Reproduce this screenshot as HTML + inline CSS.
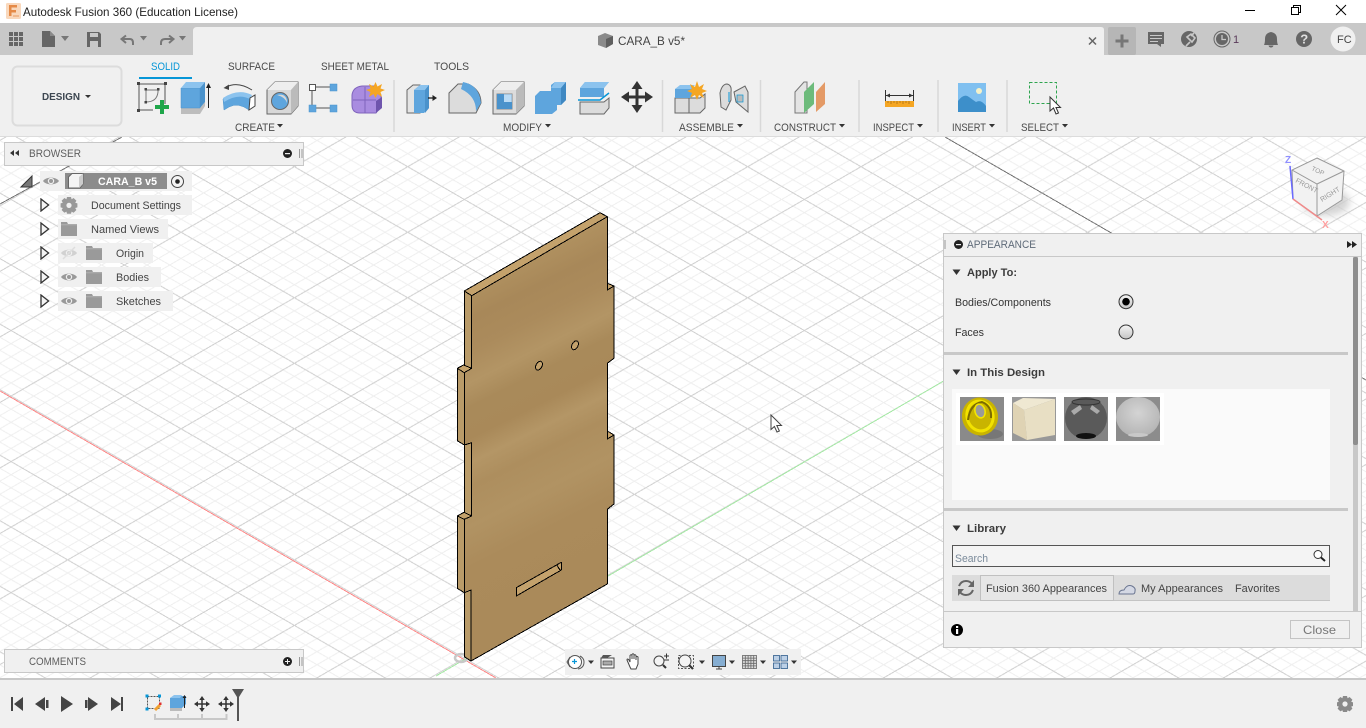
<!DOCTYPE html>
<html>
<head>
<meta charset="utf-8">
<title>Autodesk Fusion 360</title>
<style>
html,body{margin:0;padding:0;width:1366px;height:728px;overflow:hidden;background:#fff}
svg{display:block;position:absolute;left:0;top:0}
text{font-family:"Liberation Sans",sans-serif;font-size:11px;fill:#4a4a4a}
.b{font-weight:bold;fill:#3c3c3c}
.bl{fill:#5e5e5e;font-size:11px}
.t{fill:#444;font-size:11px}
</style>
</head>
<body>
<svg width="1366" height="728" viewBox="0 0 1366 728" xmlns="http://www.w3.org/2000/svg">
<defs>
<pattern id="grid" patternUnits="userSpaceOnUse" x="747.7" y="166.7" width="113.33" height="65.53">
<path fill="none" stroke="#efefef" stroke-width="1" shape-rendering="crispEdges" d="M0 -52.42L113.33 13.11M0 -39.32L113.33 26.21M0 -26.21L113.33 39.32M0 -13.11L113.33 52.42M0 13.11L113.33 78.64M0 26.21L113.33 91.74M0 39.32L113.33 104.85M0 52.42L113.33 117.95M0 13.11L113.33 -52.42M0 26.21L113.33 -39.32M0 39.32L113.33 -26.21M0 52.42L113.33 -13.11M0 78.64L113.33 13.11M0 91.74L113.33 26.21M0 104.85L113.33 39.32M0 117.95L113.33 52.42"/>
<path fill="none" stroke="#d0d0d0" stroke-width="1" shape-rendering="crispEdges" d="M0 0L113.33 65.53M0 65.53L113.33 0"/>
</pattern>
<linearGradient id="wood" gradientUnits="userSpaceOnUse" x1="480" y1="250" x2="640" y2="570">
<stop offset="0" stop-color="#ad8e5e"/>
<stop offset=".08" stop-color="#b09160"/>
<stop offset=".16" stop-color="#a88859"/>
<stop offset=".24" stop-color="#ab8b5c"/>
<stop offset=".32" stop-color="#b39565"/>
<stop offset=".38" stop-color="#a98a5a"/>
<stop offset=".46" stop-color="#a98959"/>
<stop offset=".52" stop-color="#b49666"/>
<stop offset=".58" stop-color="#ad8e5e"/>
<stop offset=".68" stop-color="#b19363"/>
<stop offset=".78" stop-color="#ab8b5b"/>
<stop offset="1" stop-color="#aa8a5a"/>
</linearGradient>
<linearGradient id="radio" x1="0" y1="0" x2="0" y2="1"><stop offset="0" stop-color="#f5f5f5"/><stop offset="1" stop-color="#c4c4c4"/></linearGradient>
<radialGradient id="frost" cx=".5" cy=".4" r=".6"><stop offset="0" stop-color="#d4d4d4"/><stop offset="1" stop-color="#b4b4b4"/></radialGradient>
<filter id="blur" x="-50%" y="-50%" width="200%" height="200%"><feGaussianBlur stdDeviation="4"/></filter>
<symbol id="folder" width="16" height="14" viewBox="0 0 16 14"><path fill="#9a9a9a" d="M0 0H6L7 2H16V14H0Z"/><path fill="#bcbcbc" d="M0 2.5H16V3.2H0Z"/></symbol>
<symbol id="eye" width="16" height="10" viewBox="0 0 16 10"><path fill="#999" d="M0 5C3 0.5 13 0.5 16 5C13 9.5 3 9.5 0 5Z"/><circle cx="8" cy="5" r="3.2" fill="#f0f0f0"/><circle cx="8" cy="5" r="2" fill="#999"/></symbol>
<symbol id="exp" width="10" height="14" viewBox="0 0 10 14"><path fill="#f4f4f4" stroke="#333" stroke-width="1.3" d="M1 1L8.6 7L1 13Z"/></symbol>
<symbol id="mv" width="32" height="32" viewBox="0 0 32 32"><path fill="#333" d="M16 0L21.5 8H17.5V14.5H24V10.5L32 16L24 21.5V17.5H17.5V24H21.5L16 32L10.5 24H14.5V17.5H8V21.5L0 16L8 10.5V14.5H14.5V8H10.5Z"/></symbol>
</defs>

<!-- viewport -->
<rect x="0" y="137" width="1366" height="542" fill="#fff"/>
<rect x="0" y="137" width="1366" height="542" fill="url(#grid)"/>
<path fill="none" stroke="#777" stroke-width="1" shape-rendering="crispEdges" d="M0 204L122 137M945 137L1366 380"/>
<path fill="none" stroke="#ff8a8a" stroke-width="1" shape-rendering="crispEdges" d="M0 391L496 678"/>
<path fill="none" stroke="#a6eaa6" stroke-width="1" shape-rendering="crispEdges" d="M943 381.4L436 676"/>
<ellipse cx="461" cy="658" rx="6" ry="4" fill="none" stroke="#c8c8c8" stroke-width="2.500"/>

<!-- body -->
<g stroke="#000" stroke-width="1" stroke-linejoin="round" shape-rendering="crispEdges">
<path fill="#b99b69" d="M464.3 291L600 212.7L607.3 216.7L471.7 295.7V368.3L464.3 372.7V445L471.7 442.7V516L464.3 519.3V592.7L471 590V661L464.3 656.7V592.7L457.3 588.3V516L464.3 512.3V445L457.3 440.7V368.3L464.3 365.7Z"/>
<path fill="url(#wood)" d="M471.7 295.7L607.3 216.7V290L614 286V358.3L607.3 363.3V439L614 435V504L607.3 509.3V584L471 661V590L464.3 592.7V519.3L471.7 516V442.7L464.3 445V372.7L471.7 368.3Z"/>
<path fill="#c4a26c" d="M464.3 291L600 212.7L607.3 216.7L471.7 295.7Z"/>
<path fill="#c4a26c" d="M457.3 368.3L463.5 365L471.7 368.3L464.3 372.7Z"/>
<path fill="#c4a26c" d="M457.3 516L464 512.3L471.7 516L464.3 519.3Z"/>
<path fill="#c4a26c" d="M607.3 283.3L614 286L607.3 290Z"/>
<path fill="#c4a26c" d="M607.3 431L614 435L607.3 439Z"/>
<ellipse cx="575" cy="345.3" rx="3" ry="4.8" transform="rotate(28 575 345.3)" fill="#c4a26c"/>
<ellipse cx="539" cy="365.7" rx="3" ry="4.8" transform="rotate(28 539 365.7)" fill="#c4a26c"/>
<path fill="#c4a26c" d="M516.3 587.7L561.3 562.3V570L516.3 596Z"/>
<path fill="none" d="M556.7 565L560 570"/>
</g>

<!-- view cube -->
<ellipse cx="1326" cy="202" rx="24" ry="14" fill="#aaa" opacity=".5" filter="url(#blur)"/>
<path fill="#f2f2f2" stroke="#999" d="M1317 158L1344 171L1342 200L1317 216L1293 199L1292 170Z"/>
<path fill="none" stroke="#999" d="M1292 170L1317 184L1344 171M1317 184V216"/>
<path stroke="#6a6aff" stroke-width="1.5" d="M1290 166L1293 199"/>
<path stroke="#f08a8a" stroke-width="1.5" d="M1293 199L1322 220"/>
<text x="1285" y="163" style="font-size:10px;font-weight:bold;fill:#8f8fff">Z</text>
<text x="1322" y="228" style="font-size:10px;font-weight:bold;fill:#ff9f9f">X</text>
<text transform="translate(1311,170) rotate(25)" style="font-size:6.5px;fill:#999">TOP</text>
<text transform="translate(1295,182) rotate(28)" style="font-size:7px;fill:#999">FRONT</text>
<text transform="translate(1322,202) rotate(-32)" style="font-size:7px;fill:#999">RIGHT</text>

<!-- cursor in viewport -->
<path fill="#fff" stroke="#444" d="M771 415V429.5L774.4 426.5L777 432L779.4 431L776.8 425.5H781.5Z"/>

<!-- title bar -->
<rect x="0" y="0" width="1366" height="23" fill="#fff"/>
<rect x="6" y="3" width="15" height="16" rx="1.5" fill="#f9d8bc"/>
<path fill="#e58a47" d="M9 5H17V7.5H11.5V10H16V12.5H11.5V16H9Z"/>
<rect x="13" y="15" width="6" height="2" fill="#f0b98f"/>
<text x="23" y="16" textLength="215" lengthAdjust="spacingAndGlyphs" style="font-size:12px;fill:#222">Autodesk Fusion 360 (Education License)</text>
<path stroke="#000" stroke-width="1" fill="none" d="M1245 10.5H1255"/>
<path stroke="#000" stroke-width="1" fill="none" d="M1291.5 7.5H1298.5V14.5H1291.5ZM1293.5 7.5V5.5H1300.5V12.5H1298.5"/>
<path stroke="#000" stroke-width="1" fill="none" d="M1336 5L1346 15M1346 5L1336 15"/>

<!-- top gray bar -->
<rect x="0" y="23" width="1366" height="32" fill="#c8c8c8"/>
<path fill="#f0f0f0" d="M193 55V31Q193 27 197 27H1101Q1104 27 1104 30V55Z"/>
<rect x="1108" y="27" width="28" height="28" rx="2" fill="#b6b6b6"/>
<path fill="#777" d="M1120.5 34.5H1123.5V39.5H1128.5V42.5H1123.5V47.5H1120.5V42.5H1115.5V39.5H1120.5Z"/>
<path stroke="#666" stroke-width="1.5" fill="none" d="M1089 37.5L1096 44.5M1096 37.5L1089 44.5"/>
<!-- app grid -->
<g fill="#666"><rect x="9" y="32" width="4" height="4"/><rect x="14" y="32" width="4" height="4"/><rect x="19" y="32" width="4" height="4"/><rect x="9" y="37" width="4" height="4"/><rect x="14" y="37" width="4" height="4"/><rect x="19" y="37" width="4" height="4"/><rect x="9" y="42" width="4" height="4"/><rect x="14" y="42" width="4" height="4"/><rect x="19" y="42" width="4" height="4"/></g>
<path fill="#666" d="M42 31H50L55 36V47H42Z"/><path fill="#8a8a8a" d="M50 31V36H55Z"/>
<path fill="#777" d="M61 36H69L65 41Z"/>
<path fill="#666" d="M87 32H99L101 34V47H87Z"/><rect x="90" y="33" width="8" height="4" fill="#c8c8c8"/><rect x="90" y="41" width="8" height="6" fill="#c8c8c8"/>
<path fill="none" stroke="#777" stroke-width="2" d="M123 39H130Q133 39 133 43V45M126 35.5L121.5 39L126 43"/>
<path fill="#777" d="M140 36H147L143.5 40.5Z"/>
<path fill="none" stroke="#777" stroke-width="2" d="M172 39H165Q161 39 161 43V45M169 35.5L173.5 39L169 43"/>
<path fill="#777" d="M179 36H186L182.5 40.5Z"/>
<!-- right bar icons -->
<path fill="#666" d="M1148 32H1164V44H1161V47L1157 44H1148Z"/><path stroke="#c8c8c8" d="M1150 35.5H1162M1150 38.5H1162M1150 41.5H1158"/>
<circle cx="1189" cy="39" r="8" fill="#666"/><path stroke="#c8c8c8" stroke-width="1.6" fill="none" d="M1186 46L1190 42M1187 37L1192 42L1195 38L1191 34ZM1191 36L1194 33"/>
<circle cx="1222" cy="39" r="8" fill="#c8c8c8" stroke="#666" stroke-width="1"/><circle cx="1222" cy="39" r="6" fill="#666"/><path stroke="#c8c8c8" stroke-width="1.3" fill="none" d="M1222 35V39.5H1226"/>
<text x="1233" y="43" style="font-size:11px;fill:#5a3a5a">1</text>
<path fill="#666" d="M1271 32Q1277 33 1277 39Q1277 43 1278 45H1264Q1265 43 1265 39Q1265 33 1271 32ZM1268.5 45.5H1273.5Q1273 47.5 1271 47.5Q1269 47.5 1268.5 45.5Z"/>
<circle cx="1304" cy="39" r="8" fill="#666"/><text x="1300.3" y="43.5" style="font-size:13px;font-weight:bold;fill:#e0e0e0">?</text>
<circle cx="1343" cy="39" r="12.5" fill="#f0f0f0"/><text x="1337" y="43" style="font-size:11px;fill:#444">FC</text>

<!-- document title -->
<path fill="#8a8a8a" d="M598 36L605 33L613 36V44L606 48L598 45Z"/><path fill="#5f5f5f" d="M606 39L613 36V44L606 48Z"/>
<text x="618" y="45" textLength="67" lengthAdjust="spacingAndGlyphs" style="font-size:12px;fill:#444">CARA_B v5*</text>

<!-- toolbar -->
<rect x="0" y="55" width="1366" height="81" fill="#f0f0f0"/>
<rect x="0" y="136" width="1366" height="1" fill="#dcdcdc"/>
<text x="151" y="70" textLength="29" lengthAdjust="spacingAndGlyphs" style="fill:#0696d7">SOLID</text>
<rect x="139" y="77" width="53" height="2" fill="#0696d7"/>
<text x="228" y="70" textLength="47" lengthAdjust="spacingAndGlyphs">SURFACE</text>
<text x="321" y="70" textLength="68" lengthAdjust="spacingAndGlyphs">SHEET METAL</text>
<text x="434" y="70" textLength="35" lengthAdjust="spacingAndGlyphs">TOOLS</text>

<rect x="12.5" y="66.5" width="109" height="59" rx="5" fill="#f0f0f0" stroke="#dcdcdc" stroke-width="2"/>
<text x="42" y="100" textLength="38" lengthAdjust="spacingAndGlyphs" style="font-size:10px;font-weight:bold;fill:#3c4650">DESIGN</text>
<path fill="#333" d="M85 95H91L88 98Z"/>

<!-- separators -->
<path stroke="#d8d8d8" stroke-width="1.5" d="M394 80V132M662.5 80V132M760.5 80V132M859 80V132M938 80V132M1007 80V132"/>

<!-- labels -->
<text x="235" y="131" textLength="40" lengthAdjust="spacingAndGlyphs">CREATE</text><path fill="#333" d="M277 124H283L280 127.5Z"/>
<text x="503" y="131" textLength="39" lengthAdjust="spacingAndGlyphs">MODIFY</text><path fill="#333" d="M545 124H551L548 127.5Z"/>
<text x="679" y="131" textLength="55" lengthAdjust="spacingAndGlyphs">ASSEMBLE</text><path fill="#333" d="M737 124H743L740 127.5Z"/>
<text x="774" y="131" textLength="62" lengthAdjust="spacingAndGlyphs">CONSTRUCT</text><path fill="#333" d="M839 124H845L842 127.5Z"/>
<text x="873" y="131" textLength="41" lengthAdjust="spacingAndGlyphs">INSPECT</text><path fill="#333" d="M917 124H923L920 127.5Z"/>
<text x="952" y="131" textLength="34" lengthAdjust="spacingAndGlyphs">INSERT</text><path fill="#333" d="M989 124H995L992 127.5Z"/>
<text x="1021" y="131" textLength="38" lengthAdjust="spacingAndGlyphs">SELECT</text><path fill="#333" d="M1062 124H1068L1065 127.5Z"/>

<!-- sketch -->
<path fill="none" stroke="#555" d="M139 84H165V104M139 84V110H153"/>
<path fill="none" stroke="#777" d="M146 90H158V92Q157 102 146 102ZM146 90V102"/>
<g fill="#444"><rect x="137" y="82" width="3" height="3"/><rect x="164" y="82" width="3" height="3"/><rect x="137" y="109" width="3" height="3"/><rect x="144.500" y="88" width="2.500" height="2.500"/><rect x="157" y="88" width="2.500" height="2.500"/><rect x="144.500" y="101" width="2.500" height="2.500"/></g>
<path fill="#1fa64a" d="M160 100H164V105H169V109H164V114H160V109H155V105H160Z"/>
<!-- extrude -->
<path fill="#bdbdbd" d="M181 108H200L205 102V106L200 114H181Z"/>
<path fill="#5ea5dd" stroke="#4b93cc" stroke-width=".5" d="M181 88H200V108H181Z"/>
<path fill="#8cc3ee" d="M181 88L186 82H205L200 88Z"/><path fill="#4a92cb" d="M200 88L205 82V102L200 108Z"/>
<path stroke="#222" fill="none" d="M208.500 108V86"/><path fill="#222" d="M208.500 83L211 88H206Z"/>
<!-- revolve -->
<path fill="none" stroke="#444" d="M226 87Q238 81 252 90"/><path fill="#444" d="M223.500 88L229 84.500L229 90Z"/>
<path fill="#5ea5dd" stroke="#4b93cc" stroke-width=".5" d="M223 99Q238 89 251 97L249 110Q238 102 229 107L224 110Z"/>
<path fill="#8cc3ee" d="M223 98Q238 88 252 95L250 99Q238 93 224 102Z"/>
<path fill="#fff" stroke="#444" d="M250 98L255 95V106L249 110Z"/>
<!-- hole -->
<path fill="#d8d8d8" stroke="#666" d="M267 90L275 82H298V106L291 114H267Z"/>
<path fill="#eee" d="M267 90L275 82H298L291 90Z"/><path fill="#bbb" d="M291 90L298 82V106L291 114Z"/>
<circle cx="280" cy="101" r="8.500" fill="#5ea5dd" stroke="#666"/><path fill="#d8d8d8" d="M277 95Q287 93 287 103Q285 97 277 95Z"/>
<!-- box points -->
<path stroke="#555" fill="none" d="M315 87H330M312 90V105M315 108H330"/>
<rect x="309.500" y="84.500" width="6" height="6" fill="#fff" stroke="#555"/>
<rect x="330" y="84" width="7" height="7" fill="#5ea5dd" stroke="#4b93cc" stroke-width=".5"/><rect x="309" y="105" width="7" height="7" fill="#5ea5dd" stroke="#4b93cc" stroke-width=".5"/><rect x="330" y="105" width="7" height="7" fill="#5ea5dd" stroke="#4b93cc" stroke-width=".5"/>
<!-- form -->
<path fill="#a98ce0" stroke="#7f63bd" d="M352 95Q353 87 362 86H374L381 95V106L376 113H360Q352 113 352 105Z"/>
<path stroke="#7f63bd" fill="none" d="M353 100H376M365 87V113"/>
<path fill="#6f55ad" d="M376 101L382 97V108L376 113Z"/>
<path fill="#f5a623" d="M375.500 82L377.500 86.500L382 84L380.500 88.500L385 90L380.500 92L382 97L377.500 94L375.500 98L373.500 94L369 97L370.500 92L366 90L370.500 88.500L369 84L373.500 86.500Z"/>

<!-- press pull -->
<path fill="#e4e4e4" stroke="#666" d="M407 90L413 85H420V113H407Z"/>
<path fill="#5ea5dd" d="M414 90L420 85H429V108L424 113H414Z"/><path fill="#8cc3ee" d="M414 90L420 85H429L425 90Z"/><path fill="#4a92cb" d="M425 90L429 85V108L425 113Z"/>
<path stroke="#222" stroke-width="1.3" d="M428 98H434"/><path fill="#222" d="M437 98L432.500 95V101Z"/>
<!-- fillet -->
<path fill="#dcdcdc" stroke="#666" d="M449 93L458 84H468Q481 90 481 103L476 113H449Z"/>
<path fill="#5ea5dd" d="M463 82Q479 85 481 103L476 111Q476 96 461 89Z"/>
<!-- shell -->
<path fill="#dcdcdc" stroke="#666" d="M493 90L501 82H524V106L516 114H493Z"/>
<path fill="#eee" d="M493 90L501 82H524L516 90Z"/><path fill="#bbb" d="M516 90L524 82V106L516 114Z"/>
<rect x="497" y="94" width="15" height="15" fill="#fff" stroke="#888"/>
<path fill="#4a92cb" d="M497 94H504V102H512V109H497Z"/><path fill="#8cc3ee" d="M504 94H512V102H504Z" opacity=".6"/>
<!-- combine -->
<path fill="#5ea5dd" d="M535 96L540 91H551V85L555 82H566V100L561 105H557V110L552 114H535Z"/>
<path fill="#8cc3ee" d="M551 88L555 82H566L561 88Z"/><path fill="#3f88c2" d="M561 88L566 82V100L561 105Z"/>
<!-- split -->
<path fill="#5ea5dd" d="M580 88L585 82H609L604 88V97H580Z"/><path fill="#8cc3ee" d="M580 88L585 82H609L604 88Z"/>
<path fill="#dcdcdc" stroke="#666" d="M580 102H604L609 98V108L604 114H580Z"/>
<path stroke="#0696d7" stroke-width="1.5" fill="none" d="M578 100H600L609 93"/>
<!-- move -->
<use href="#mv" x="621" y="81"/>
<!-- assemble -->
<path fill="#dcdcdc" stroke="#666" d="M675 98H689V113H675Z"/><path fill="#dcdcdc" stroke="#666" d="M689 98H700L705 94V108L700 113H689Z"/>
<path fill="#5ea5dd" d="M675 89L680 86H692V98H675Z"/><path fill="#8cc3ee" d="M675 89L680 85H695L691 89Z"/>
<path fill="#f5a623" d="M697 81L699 87L704 84L702 89L707 91L702 93L704 98L699 95L697 100L695 95L690 98L692 93L687 91L692 89L690 84L695 87Z"/>
<!-- joint -->
<path fill="#dcdcdc" stroke="#666" d="M720 93Q722 84 727 84Q732 85 731 92V100L726 110L721 107Z"/>
<path fill="#dcdcdc" stroke="#666" d="M734 92L745 86L748 92V112L736 102Z"/>
<path stroke="#0696d7" fill="none" d="M729 92V102"/><rect x="737" y="95" width="6" height="7" fill="#bbb" stroke="#0696d7" stroke-width=".7"/>
<!-- construct -->
<path fill="#e4e4e4" stroke="#777" d="M795 92L804 82H807V113H795Z"/>
<path fill="#6dbb7b" d="M804 92L814 82V104L804 113Z"/>
<path fill="#e49a66" d="M816 92L825 82V104L816 112Z"/>
<!-- inspect -->
<path stroke="#333" fill="none" d="M885.500 90V101M913.500 90V101M886 95.500H913"/>
<path fill="#333" d="M886 95.500L890 93.500V97.500ZM913 95.500L909 93.500V97.500Z"/>
<rect x="885" y="101" width="29" height="6" fill="#f5a623"/>
<path stroke="#a06a10" stroke-width=".7" d="M888 101V103M891 101V104M894 101V103M897 101V104M900 101V103M903 101V104M906 101V103M909 101V104"/>
<!-- insert -->
<rect x="958" y="83" width="28" height="29" fill="#80c0f0"/>
<path fill="#3d8fca" d="M958 112V101Q964 93 969 97Q973 100 976 102Q981 99 986 106V112Z"/>
<circle cx="979" cy="91" r="3" fill="#f4f1c9"/>
<!-- select -->
<rect x="1029.500" y="82.500" width="27" height="21" fill="none" stroke="#2ea44f" stroke-dasharray="3 2"/>
<path fill="#fff" stroke="#333" d="M1050 97V111L1053.500 108L1056 114L1058.500 113L1056 107.500H1060.500Z"/>

<!-- browser -->
<rect x="4.500" y="142.500" width="299" height="23" fill="#f0f0f0" stroke="#c8c8c8"/>
<path fill="#333" d="M14 150V156L10 153ZM19 150V156L15 153Z"/>
<text x="29" y="157" textLength="52" lengthAdjust="spacingAndGlyphs" class="bl">BROWSER</text>
<circle cx="287.500" cy="153.500" r="4.500" fill="#222"/><rect x="285" y="153" width="5" height="1.200" fill="#f0f0f0"/>
<path stroke="#999" d="M299.500 149V158M302 149V158"/>

<path fill="#777" stroke="#333" d="M21 187L32 176V187Z"/>
<rect x="40" y="171" width="152" height="20" fill="#f0f0f0"/>
<use href="#eye" x="43" y="176"/>
<rect x="65" y="173" width="102" height="16" fill="#8c8c8c"/>
<path fill="#f4f4f4" stroke="#666" d="M68.500 177L72 173.500H83V184L80 188H68.500Z"/><path fill="#ccc" d="M79 177L83 173.500V184L79 188Z"/>
<text x="98" y="185" textLength="59" lengthAdjust="spacingAndGlyphs" style="font-size:11px;font-weight:bold;fill:#fff">CARA_B v5</text>
<circle cx="177.500" cy="181.500" r="6" fill="#f4f4f4" stroke="#444"/><circle cx="177.500" cy="181.500" r="2.300" fill="#222"/>

<use href="#exp" x="40" y="198"/>
<rect x="58" y="195" width="134" height="20" fill="#f0f0f0"/>
<path fill="#999" d="M67 197H71L71.600 199.200L73.600 198L76.400 200.800L75.200 202.800L77.400 203.400V207.400L75.200 208L76.400 210L73.600 212.800L71.600 211.600L71 213.800H67L66.400 211.600L64.400 212.800L61.600 210L62.800 208L60.600 207.400V203.400L62.800 202.800L61.600 200.800L64.400 198L66.400 199.200ZM69 202.800A2.600 2.600 0 1 0 69 208A2.600 2.600 0 1 0 69 202.800Z" fill-rule="evenodd"/>
<text x="91" y="209" textLength="90" lengthAdjust="spacingAndGlyphs" class="t">Document Settings</text>

<use href="#exp" x="40" y="222"/>
<rect x="58" y="219" width="110" height="20" fill="#f0f0f0"/>
<use href="#folder" x="61" y="222"/>
<text x="91" y="233" textLength="68" lengthAdjust="spacingAndGlyphs" class="t">Named Views</text>

<use href="#exp" x="40" y="246"/>
<rect x="58" y="243" width="95" height="20" fill="#f0f0f0"/>
<g opacity=".35"><use href="#eye" x="61" y="248"/></g>
<path stroke="#ddd" stroke-width="1.500" d="M63 259L75 247"/>
<use href="#folder" x="86" y="246"/>
<text x="116" y="257" textLength="28" lengthAdjust="spacingAndGlyphs" class="t">Origin</text>

<use href="#exp" x="40" y="270"/>
<rect x="58" y="267" width="103" height="20" fill="#f0f0f0"/>
<use href="#eye" x="61" y="272"/>
<use href="#folder" x="86" y="270"/>
<text x="116" y="281" textLength="33" lengthAdjust="spacingAndGlyphs" class="t">Bodies</text>

<use href="#exp" x="40" y="294"/>
<rect x="58" y="291" width="115" height="20" fill="#f0f0f0"/>
<use href="#eye" x="61" y="296"/>
<use href="#folder" x="86" y="294"/>
<text x="116" y="305" textLength="45" lengthAdjust="spacingAndGlyphs" class="t">Sketches</text>

<!-- comments -->
<rect x="4.500" y="649.500" width="299" height="23" fill="#f0f0f0" stroke="#c8c8c8"/>
<text x="29" y="665" textLength="57" lengthAdjust="spacingAndGlyphs" class="bl">COMMENTS</text>
<circle cx="287.500" cy="661.500" r="4.500" fill="#222"/><path fill="#f0f0f0" d="M287 659H288V661H290V662H288V664H287V662H285V661H287Z"/>
<path stroke="#999" d="M299.500 657V666M302 657V666"/>

<!-- nav bar -->
<rect x="565" y="649" width="236" height="26" fill="#f0f0f0"/>
<ellipse cx="575" cy="662" rx="6.500" ry="6.500" fill="#fff" stroke="#555"/><path fill="none" stroke="#555" d="M570 657L567 662L570 667M578 669Q584 668 584 662Q584 658 580 656"/><path stroke="#0696d7" stroke-width="1.200" d="M572 661.500H577M574.500 659V664"/>
<path fill="#333" d="M588 660.500H594L591 664Z"/>
<path fill="#f4f4f4" stroke="#444" d="M601 658H614V668H601Z"/><path fill="#555" d="M603 655H612L607 658H601Z"/><rect x="603" y="661" width="9" height="4" fill="#aaa" stroke="#444" stroke-width=".7"/>
<path fill="#fff" stroke="#444" d="M630 667L627 660Q627 658 629 660L630 662V655.500Q631 654 632 655.500V659V654.500Q633 653 634 654.500V659V655.500Q635 654 636 655.500V660V657Q637 656 638 657V664L636 669H631Z"/>
<circle cx="659" cy="661" r="5" fill="#f4f4f4" stroke="#444"/><path stroke="#333" stroke-width="2" d="M663 665L666 668"/><path stroke="#333" d="M664 656H669M666.500 653.500V658.500M664 660H669"/>
<rect x="678.500" y="655.500" width="15" height="13" fill="none" stroke="#555" stroke-dasharray="2 1.500"/>
<circle cx="685" cy="661" r="6" fill="#f4f4f4" stroke="#444"/><path stroke="#333" stroke-width="2.200" d="M689 665L693 669"/>
<path fill="#333" d="M699 660.500H705L702 664Z"/>
<rect x="712.500" y="655.500" width="13" height="11" fill="#86aed2" stroke="#444"/><path stroke="#444" fill="none" d="M716 669H722M719 667V669"/>
<path fill="#333" d="M729 660.500H735L732 664Z"/>
<g fill="#ddd" stroke="#666" stroke-width=".8"><rect x="742.500" y="655.500" width="14" height="13"/><path fill="none" d="M745.300 655.500V668.500M748.100 655.500V668.500M750.900 655.500V668.500M753.700 655.500V668.500M742.500 658.100H756.500M742.500 660.700H756.500M742.500 663.300H756.500M742.500 665.900H756.500"/></g>
<path fill="#333" d="M760 660.500H766L763 664Z"/>
<g fill="#bcd0e6" stroke="#2f5d8c" stroke-width=".8"><rect x="773.500" y="655.500" width="6" height="5.500"/><rect x="781" y="655.500" width="6.500" height="5.500"/><rect x="773.500" y="663" width="6" height="5.500"/><rect x="781" y="663" width="6.500" height="5.500"/></g>
<path fill="#333" d="M791 660.500H797L794 664Z"/>

<!-- appearance panel -->
<rect x="943.500" y="233.500" width="418" height="414" fill="#f0f0f0" stroke="#c8c8c8"/>
<path stroke="#c8c8c8" d="M944 256.500H1361M944 611.500H1361"/>
<path stroke="#999" d="M945 240V249"/>
<circle cx="958.500" cy="244.500" r="4.500" fill="#222"/><rect x="956" y="244" width="5" height="1.200" fill="#f0f0f0"/>
<text x="967" y="248" textLength="69" lengthAdjust="spacingAndGlyphs" class="bl" style="fill:#5e6a78">APPEARANCE</text>
<path fill="#222" d="M1347 241V248L1352 244.500ZM1352 241V248L1357 244.500Z"/>
<rect x="1353" y="257" width="5" height="354" fill="#c8c8c8"/>
<rect x="1353" y="257" width="5" height="188" rx="2" fill="#8e8e8e"/>

<path fill="#333" d="M952.500 269.500H960.500L956.500 275Z"/>
<text x="967" y="276" textLength="50" lengthAdjust="spacingAndGlyphs" class="b">Apply To:</text>
<text x="955" y="306" textLength="96" lengthAdjust="spacingAndGlyphs" class="t" style="fill:#333">Bodies/Components</text>
<circle cx="1126" cy="301.700" r="7" fill="url(#radio)" stroke="#333"/><circle cx="1126" cy="301.700" r="3.800" fill="#000"/>
<text x="955" y="336" textLength="29" lengthAdjust="spacingAndGlyphs" class="t" style="fill:#333">Faces</text>
<circle cx="1126" cy="332" r="7" fill="url(#radio)" stroke="#333"/>
<rect x="944" y="352" width="404" height="3" fill="#c8c8c8"/>

<path fill="#333" d="M952.500 369.500H960.500L956.500 375Z"/>
<text x="967" y="376" textLength="78" lengthAdjust="spacingAndGlyphs" class="b">In This Design</text>
<rect x="952" y="389" width="378" height="111" fill="#fafafa"/>
<rect x="956" y="393" width="208" height="52" fill="#fff"/>
<!-- thumbs -->
<rect x="960" y="397" width="44" height="44" fill="#8a8a8a"/>
<ellipse cx="990" cy="434" rx="13" ry="5" fill="#777"/>
<ellipse cx="980" cy="416.500" rx="18" ry="19" transform="rotate(-15 980 416.500)" fill="#c9b400"/>
<ellipse cx="980" cy="416" rx="13" ry="15" transform="rotate(-15 980 416)" fill="none" stroke="#f2e200" stroke-width="3"/>
<path fill="none" stroke="#7c6c00" stroke-width="2" d="M968 420Q970 404 982 402Q992 406 991 418"/>
<ellipse cx="980" cy="411" rx="5" ry="7" transform="rotate(-15 980 411)" fill="#9a9a9a" stroke="#f4e600" stroke-width="1.500"/>
<rect x="1012" y="397" width="44" height="44" fill="#989898"/>
<path fill="#efe8d2" d="M1013 403L1023 398L1055 399L1024 410Z"/><path fill="#dfd3b4" d="M1013 403L1024 410L1027 440L1013 433Z"/><path fill="#e8dfc4" d="M1024 410L1055 399V435L1027 440Z"/>
<rect x="1064" y="397" width="44" height="44" fill="#838383"/>
<circle cx="1086" cy="418" r="21" fill="#5a5a5a"/><path fill="#aaa" d="M1071 411L1080 405L1082 409L1074 415ZM1092 405L1100 411L1097 414L1090 409Z"/><ellipse cx="1086" cy="402" rx="14" ry="3" fill="none" stroke="#333"/><ellipse cx="1086" cy="436" rx="10" ry="3" fill="#111"/>
<rect x="1116" y="397" width="44" height="44" fill="#8c8c8c"/>
<ellipse cx="1138" cy="417" rx="22" ry="20" fill="url(#frost)"/><ellipse cx="1138" cy="435" rx="10" ry="2" fill="#c8c8c8"/>
<rect x="944" y="508" width="404" height="3" fill="#c8c8c8"/>

<path fill="#333" d="M952.500 525.500H960.500L956.500 531Z"/>
<text x="967" y="532" textLength="39" lengthAdjust="spacingAndGlyphs" class="b">Library</text>
<rect x="952.500" y="545.500" width="377" height="21" fill="#f4f4f4" stroke="#555"/>
<text x="955" y="562" textLength="33" lengthAdjust="spacingAndGlyphs" style="fill:#7a8a9a">Search</text>
<circle cx="1318" cy="554.500" r="4" fill="#fff" stroke="#333"/><path stroke="#222" stroke-width="2" d="M1321 557.500L1325 561"/>
<rect x="952" y="575" width="378" height="26" fill="#dcdcdc"/>
<rect x="980.500" y="575.500" width="133" height="25" fill="#e6e6e6" stroke="#c0c0c0"/>
<path stroke="#c4c4c4" d="M1114 600.500H1330"/>
<path fill="none" stroke="#666" stroke-width="2" d="M959 586Q961 581 966 581Q970 581 972 584M973 590Q971 595 966 595Q962 595 960 592"/>
<path fill="#666" d="M974 580V587H968ZM958 596V589H964Z"/>
<text x="986" y="592" textLength="121" lengthAdjust="spacingAndGlyphs" style="fill:#444">Fusion 360 Appearances</text>
<path fill="#d4d8e4" stroke="#6a7590" d="M1119 594Q1119 590 1124 590Q1127 584 1132 586Q1136 588 1135 591Q1135 594 1133 594Z"/>
<text x="1141" y="592" textLength="82" lengthAdjust="spacingAndGlyphs" style="fill:#444">My Appearances</text>
<text x="1235" y="592" textLength="45" lengthAdjust="spacingAndGlyphs" style="fill:#444">Favorites</text>
<circle cx="957" cy="630" r="6" fill="#000"/><rect x="956" y="629" width="2.200" height="5" fill="#fff"/><rect x="956" y="626" width="2.200" height="2" fill="#fff"/>
<rect x="1290.500" y="620.500" width="59" height="18" fill="#f0f0f0" stroke="#c4c4c4"/>
<text x="1303" y="634" textLength="33" lengthAdjust="spacingAndGlyphs" style="font-size:12px;fill:#777">Close</text>

<!-- timeline -->
<rect x="0" y="680" width="1366" height="48" fill="#f0f0f0"/>
<rect x="0" y="678" width="1366" height="2" fill="#c8c8c8"/>
<g fill="#444">
<rect x="11" y="697" width="2" height="14"/><path d="M23 697V711L14 704Z"/>
<path d="M45 697V711L35 704Z"/><rect x="46" y="700" width="2.500" height="8"/>
<path d="M61 696V712L73 704Z"/>
<rect x="85" y="700" width="2.500" height="8"/><path d="M88 697V711L98 704Z"/>
<path d="M111 697V711L121 704Z"/><rect x="121" y="697" width="2" height="14"/>
</g>
<rect x="147.500" y="696.500" width="12" height="12" fill="none" stroke="#555" stroke-dasharray="2 1"/>
<g fill="#0696d7"><rect x="145.500" y="694.500" width="3" height="3"/><rect x="158" y="694.500" width="3" height="3"/><rect x="145.500" y="707.500" width="3" height="3"/></g>
<path stroke="#f0a030" stroke-width="3" d="M155 710L160 705"/><rect x="159" y="702.500" width="2.500" height="2.500" fill="#e03030"/>
<path fill="#5ea5dd" d="M170 698L174 696H186V704L182 708H170Z"/><path fill="#8cc3ee" d="M170 698L174 695H182L180 698Z"/><rect x="170" y="708" width="12" height="3" fill="#bbb"/>
<path stroke="#222" d="M184.500 708V697"/><path fill="#222" d="M184.500 695L186.500 698H182.500Z"/>
<use href="#mv" x="194" y="695" width="16" height="18"/>
<use href="#mv" x="218" y="695" width="16" height="18"/>
<path fill="none" stroke="#c8c8c8" stroke-width="2" d="M155 714V719H226.500V714M178 714V719M202 714V719"/>
<path fill="#555" d="M232 689H244L239 697V721H237V697Z"/>
<g transform="translate(1345,704)"><path fill="#8a8a8a" fill-rule="evenodd" d="M-2 -8H2L2.600 -5.800L4.600 -7L7.400 -4.200L6.200 -2.200L8 -1.600V2L6.200 2.600L7.400 4.600L4.600 7.400L2.600 6.200L2 8H-2L-2.600 6.200L-4.600 7.400L-7.400 4.600L-6.200 2.600L-8 2V-1.600L-6.200 -2.200L-7.400 -4.200L-4.600 -7L-2.600 -5.800ZM0 -2.600A2.600 2.600 0 1 0 0 2.600A2.600 2.600 0 1 0 0 -2.600Z"/></g>
</svg>
</body>
</html>
